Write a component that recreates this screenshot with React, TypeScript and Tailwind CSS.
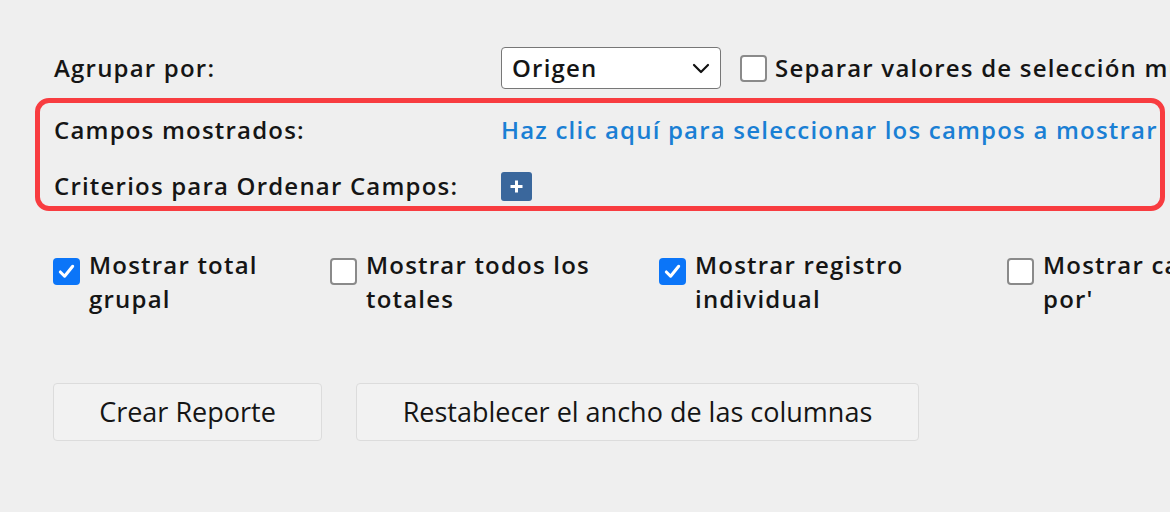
import React from "react";

function Check({ checked }: { checked: boolean }) {
  return checked ? (
    <span className="mt-[10px] flex h-[27px] w-[27px] shrink-0 items-center justify-center rounded-[4px] bg-[#0b75f8]">
      <svg width="19" height="19" viewBox="0 0 20 20" fill="none">
        <path d="M3.5 10.5 L8 15 L16.5 4.5" stroke="white" strokeWidth="3.2" strokeLinecap="round" strokeLinejoin="round" />
      </svg>
    </span>
  ) : (
    <span className="mt-[10px] block h-[27px] w-[27px] shrink-0 rounded-[4px] border-2 border-[#8a8a8a] bg-white" />
  );
}

function CheckItem({ checked, lines, width }: { checked: boolean; lines: string[]; width: string }) {
  return (
    <div className={`flex shrink-0 items-start gap-[9px] ${width}`}>
      <Check checked={checked} />
      <div className="leading-[34px] whitespace-nowrap">
        {lines.map((l, i) => (
          <div key={i}>{l}</div>
        ))}
      </div>
    </div>
  );
}

export default function App() {
  return (
    <div
      className="h-[512px] w-[1170px] overflow-hidden bg-[#efefef] text-[24px] font-semibold tracking-[1.2px] text-[#151515]"
      style={{ fontFamily: '"Open Sans", "Noto Sans", sans-serif' }}
    >
      <div className="pt-[47px]">
        {/* Agrupar por */}
        <div className="flex h-[42px] items-center pl-[54px]">
          <div className="w-[447px] shrink-0">Agrupar por:</div>
          <div className="flex h-[42px] w-[220px] shrink-0 items-center justify-between rounded-[4px] border border-[#777] bg-white pl-[10px] pr-[10px]">
            <span>Origen</span>
            <svg width="18" height="12" viewBox="0 0 18 12" fill="none">
              <path d="M2 3 L9 10 L16 3" stroke="#111" strokeWidth="2.2" strokeLinecap="round" strokeLinejoin="round" />
            </svg>
          </div>
          <div className="ml-[19px] flex items-center gap-[8px] whitespace-nowrap">
            <span className="block h-[27px] w-[27px] shrink-0 rounded-[4px] border-2 border-[#8a8a8a] bg-white" />
            <span>Separar valores de selección múltiple</span>
          </div>
        </div>

        {/* Red highlighted box */}
        <div className="ml-[35px] mt-[9px] h-[113px] w-[1130px] rounded-[14px] border-[5px] border-[#f83c40] pl-[14px]">
          <div className="flex h-[54px] items-center">
            <div className="w-[447px] shrink-0">Campos mostrados:</div>
            <div className="whitespace-nowrap text-[#1a7fd4]">Haz clic aquí para seleccionar los campos a mostrar</div>
          </div>
          <div className="flex h-[58px] items-center">
            <div className="w-[447px] shrink-0">Criterios para Ordenar Campos:</div>
            <span className="flex h-[29px] w-[31px] items-center justify-center rounded-[3px] bg-[#3a679c]">
              <svg width="15" height="15" viewBox="0 0 15 15">
                <path d="M7.5 1.5 V13.5 M1.5 7.5 H13.5" stroke="white" strokeWidth="3" />
              </svg>
            </span>
          </div>
        </div>

        {/* Checkboxes */}
        <div className="mt-[37px] flex pl-[53px]">
          <CheckItem checked lines={["Mostrar total", "grupal"]} width="w-[277px]" />
          <CheckItem checked={false} lines={["Mostrar todos los", "totales"]} width="w-[329px]" />
          <CheckItem checked lines={["Mostrar registro", "individual"]} width="w-[348px]" />
          <CheckItem checked={false} lines={["Mostrar campos", "por'"]} width="w-[300px]" />
        </div>

        {/* Buttons */}
        <div className="mt-[67px] flex gap-[34px] pl-[53px]">
          <button className="flex h-[58px] w-[269px] items-center justify-center rounded-[4px] border border-[#dcdcdc] bg-[#f2f2f2] text-[27px] font-normal tracking-normal">
            <span className="whitespace-nowrap">Crear Reporte</span>
          </button>
          <button className="flex h-[58px] w-[563px] items-center justify-center rounded-[4px] border border-[#dcdcdc] bg-[#f2f2f2] text-[27px] font-normal tracking-normal">
            <span className="whitespace-nowrap">Restablecer el ancho de las columnas</span>
          </button>
        </div>
      </div>
    </div>
  );
}
